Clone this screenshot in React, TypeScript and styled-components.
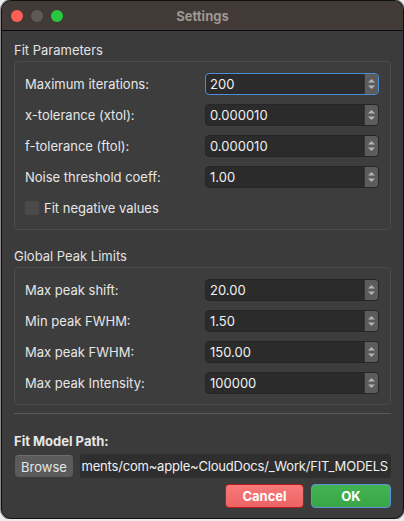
import styled, { createGlobalStyle } from 'styled-components';

const GlobalStyle = createGlobalStyle`
  html, body {
    margin: 0;
    padding: 0;
    background: #ececec;
  }
  body {
    font-family: Inter, "Liberation Sans", sans-serif;
    font-size: 13px;
    -webkit-font-smoothing: antialiased;
  }
`;

const Window = styled.div`
  margin-left: 1px;
  width: 401px;
  height: 517px;
  border: 1px solid #101010;
  box-shadow: 0 0 0 1px #8a8a8a;
  border-radius: 10px;
  background: #3b3b3b;
  overflow: hidden;
  display: flex;
  flex-direction: column;
`;

const TitleBar = styled.div`
  height: 29px;
  flex: none;
  background: #423a37;
  border-bottom: 1px solid #0c0c0c;
  display: flex;
  align-items: center;
  justify-content: center;
  position: relative;
`;

const Lights = styled.div`
  position: absolute;
  left: 9px;
  top: 9px;
  display: flex;
  gap: 8px;
`;

const Light = styled.span<{ $color: string }>`
  width: 12px;
  height: 12px;
  border-radius: 50%;
  background: ${(p) => p.$color};
`;

const Title = styled.span`
  color: #9e9794;
  font-weight: 700;
  font-size: 13px;
`;

const Body = styled.div`
  flex: 1;
  padding: 10px 12px 0 12px;
  display: flex;
  flex-direction: column;
`;

const SectionTitle = styled.div<{ $top: number }>`
  margin-top: ${(p) => p.$top}px;
  color: #e2e2e2;
  line-height: 16px;
  height: 16px;
  margin-bottom: 3px;
`;

const Group = styled.div`
  border: 1px solid #4c4c4c;
  border-radius: 4px;
  background: #3d3d3d;
  padding: 11px 11px 10px 10px;
  display: grid;
  grid-template-columns: 180px 1fr;
  row-gap: 9px;
  align-items: center;
`;

const Label = styled.div`
  color: #e6e6e6;
  line-height: 22px;
  white-space: nowrap;
`;

const Spin = styled.div<{ $focus?: boolean }>`
  height: 22px;
  box-sizing: border-box;
  border-radius: 4px;
  background: #2b2b2b;
  border: 1px solid ${(p) => (p.$focus ? '#4b8ed6' : '#262626')};
  display: flex;
  overflow: hidden;
`;

const SpinValue = styled.div`
  flex: 1;
  color: #f0f0f0;
  padding-left: 4px;
  line-height: 20px;
`;

const Arrows = styled.div`
  width: 13px;
  background: #5c5c5c;
  display: flex;
  align-items: center;
  justify-content: center;
  border-left: 1px solid #333;
`;

const CheckRow = styled.div`
  grid-column: 1 / span 2;
  display: flex;
  align-items: center;
  gap: 5px;
  height: 22px;
`;

const Check = styled.span`
  width: 14px;
  height: 14px;
  border-radius: 3px;
  background: #4a4a4a;
`;

const Separator = styled.div`
  margin-top: 8px;
  height: 1px;
  background: #5a5a5a;
`;

const PathTitle = styled.div`
  margin-top: 19px;
  color: #e6e6e6;
  font-weight: 700;
  line-height: 16px;
`;

const PathRow = styled.div`
  margin-top: 5px;
  display: flex;
  align-items: center;
  gap: 7px;
  padding-left: 1px;
`;

const BrowseButton = styled.div`
  width: 58px;
  height: 22px;
  flex: none;
  box-sizing: border-box;
  border-radius: 4px;
  background: #5b5b5b;
  border-top: 1px solid #6c6c6c;
  color: #e6e6e6;
  display: flex;
  align-items: center;
  justify-content: center;
`;

const PathField = styled.div`
  flex: 1;
  min-width: 0;
  height: 24px;
  border-radius: 3px;
  background: #2e2e2e;
  color: #f0f0f0;
  display: flex;
  justify-content: flex-end;
  align-items: center;
  overflow: hidden;
  white-space: nowrap;
  padding: 0 3px 0 1px;
  letter-spacing: -0.2px;
`;

const Buttons = styled.div`
  margin-top: 6px;
  display: flex;
  justify-content: flex-end;
  gap: 7px;
`;

const DialogButton = styled.div<{ $kind: 'cancel' | 'ok' }>`
  width: ${(p) => (p.$kind === 'cancel' ? 79 : 80)}px;
  height: 24px;
  box-sizing: border-box;
  border-radius: 4px;
  border: 1px solid ${(p) => (p.$kind === 'cancel' ? '#b51d1d' : '#5a93da')};
  background: ${(p) =>
    p.$kind === 'cancel'
      ? 'linear-gradient(#f77a7a, #ee6363)'
      : 'linear-gradient(#44b452, #38a546)'};
  color: #fff;
  font-weight: 700;
  display: flex;
  align-items: center;
  justify-content: center;
`;

const SpinArrows = () => (
  <svg width="9" height="14" viewBox="0 0 9 14">
    <path d="M1 5.5 L4.5 2 L8 5.5 Z" fill="#b4b4b4" />
    <path d="M1 8.5 L4.5 12 L8 8.5 Z" fill="#b4b4b4" />
  </svg>
);

const SpinField = ({ label, value, focus }: { label: string; value: string; focus?: boolean }) => (
  <>
    <Label>{label}</Label>
    <Spin $focus={focus}>
      <SpinValue>{value}</SpinValue>
      <Arrows>
        <SpinArrows />
      </Arrows>
    </Spin>
  </>
);

export default function App() {
  return (
    <>
      <GlobalStyle />
      <Window>
        <TitleBar>
          <Lights>
            <Light $color="#fe5f57" />
            <Light $color="#5f5a58" />
            <Light $color="#28c840" />
          </Lights>
          <Title>Settings</Title>
        </TitleBar>
        <Body>
          <SectionTitle $top={1}>Fit Parameters</SectionTitle>
          <Group>
            <SpinField label="Maximum iterations:" value="200" focus />
            <SpinField label="x-tolerance (xtol):" value="0.000010" />
            <SpinField label="f-tolerance (ftol):" value="0.000010" />
            <SpinField label="Noise threshold coeff:" value="1.00" />
            <CheckRow>
              <Check />
              <Label>Fit negative values</Label>
            </CheckRow>
          </Group>
          <SectionTitle $top={18}>Global Peak Limits</SectionTitle>
          <Group>
            <SpinField label="Max peak shift:" value="20.00" />
            <SpinField label="Min peak FWHM:" value="1.50" />
            <SpinField label="Max peak FWHM:" value="150.00" />
            <SpinField label="Max peak Intensity:" value="100000" />
          </Group>
          <Separator />
          <PathTitle>Fit Model Path:</PathTitle>
          <PathRow>
            <BrowseButton>Browse</BrowseButton>
            <PathField>ments/com~apple~CloudDocs/_Work/FIT_MODELS</PathField>
          </PathRow>
          <Buttons>
            <DialogButton $kind="cancel">Cancel</DialogButton>
            <DialogButton $kind="ok">OK</DialogButton>
          </Buttons>
        </Body>
      </Window>
    </>
  );
}
